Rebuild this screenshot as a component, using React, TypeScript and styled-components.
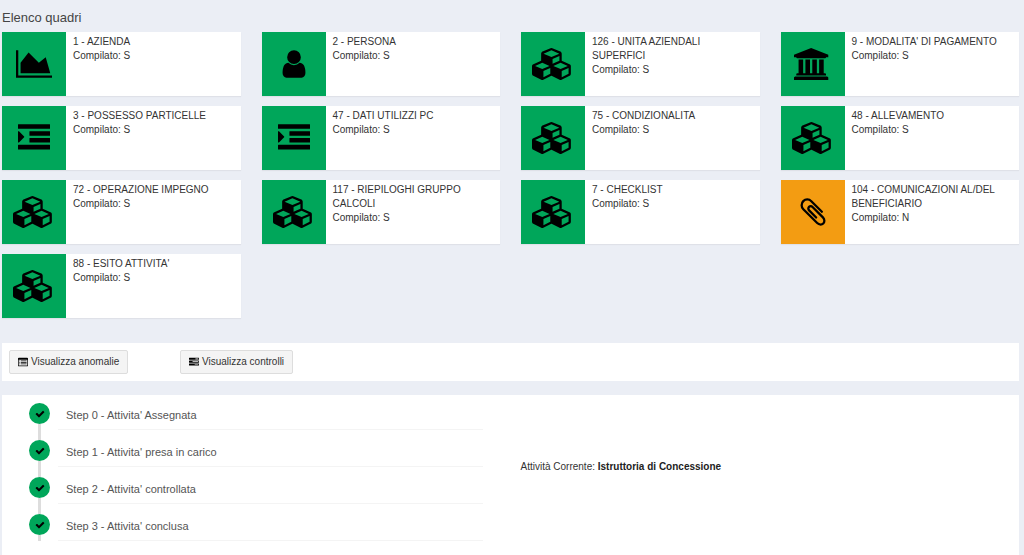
import React from "react";
import styled, { createGlobalStyle } from "styled-components";

const GlobalStyle = createGlobalStyle`
  *, *::before, *::after { box-sizing: border-box; }
  body {
    margin: 0;
    background: #ebeef5;
    color: #333;
    font-family: "Liberation Sans", Arial, sans-serif;
    font-size: 10px;
    line-height: 14px;
  }
`;

const Page = styled.main`
  display: flex;
  flex-direction: column;
  min-height: 100vh;
  padding: 11px 5px 0 2px;
`;

const Title = styled.h1`
  margin: 0 0 7px;
  font-size: 13px;
  line-height: 14px;
  font-weight: 400;
  color: #444;
`;

const Grid = styled.section`
  display: grid;
  grid-template-columns: repeat(4, minmax(0, 1fr));
  gap: 10px 21px;
`;

const Card = styled.article`
  display: flex;
  min-height: 64px;
  background: #fff;
  box-shadow: 0 1px 1px rgba(0, 0, 0, 0.05);
`;

const CardIcon = styled.div<{ $tone: Tone }>`
  display: flex;
  flex: none;
  align-items: center;
  justify-content: center;
  width: 64px;
  background: ${(p) => (p.$tone === "green" ? "#00a65a" : "#f39c12")};
`;

const CardBody = styled.div`
  flex: 1;
  min-width: 0;
  padding: 3px 7px;
`;

const CardLine = styled.p`
  margin: 0;
  line-height: 14px;
`;

const Glyph = styled.svg<{ $size: number }>`
  display: block;
  flex: none;
  height: ${(p) => p.$size}px;
  width: auto;
  fill: #000;
`;

const Toolbar = styled.section`
  display: grid;
  grid-template-columns: repeat(6, minmax(0, 1fr));
  column-gap: 23px;
  margin-top: 25px;
  padding: 7px;
  background: #fff;
`;

const Button = styled.button`
  display: inline-flex;
  align-items: center;
  justify-self: start;
  gap: 3px;
  height: 24px;
  padding: 0 8px;
  border: 1px solid #ddd;
  border-radius: 2px;
  background: #f4f4f4;
  color: #333;
  font: inherit;
  white-space: nowrap;
  cursor: pointer;
`;

const Activity = styled.section`
  display: grid;
  flex: 1;
  grid-template-columns: minmax(0, 1fr) minmax(0, 1fr);
  align-items: start;
  margin-top: 14px;
  padding: 8px 0 14px;
  background: #fff;
`;

const Steps = styled.ol`
  margin: 0;
  padding: 0 28px 0 27px;
  list-style: none;
`;

const Step = styled.li`
  display: flex;
  gap: 8px;
`;

const Marker = styled.div`
  display: flex;
  flex-direction: column;
  align-items: center;
  width: 21px;

  &::after {
    content: "";
    flex: 1;
    width: 3px;
    background: #ddd;
  }
`;

const Dot = styled.span`
  display: flex;
  align-items: center;
  justify-content: center;
  width: 21px;
  height: 21px;
  border-radius: 50%;
  background: #00a65a;
`;

const StepText = styled.div`
  flex: 1;
  height: 27px;
  margin-bottom: 10px;
  padding: 5px 8px;
  border-bottom: 1px solid #f4f4f4;
  color: #555;
  font-size: 11px;

  ${Step}:last-child & {
    margin-bottom: 0;
  }
`;

const Current = styled.p`
  margin: 0;
  padding: 57px 10px 0;
`;

const Strong = styled.strong`
  color: #222;
`;

type Tone = "green" | "orange";

const icons = {
  chart: {
    width: 2048,
    d: "M2048 1536v128h-2048v-1536h128v1408h1920zm-384-1024l256 896h-1664v-576l448-576 576 576z",
  },
  user: {
    width: 1792,
    d: "M1536 1399q0 109-62.500 187t-150.500 78h-854q-88 0-150.500-78t-62.500-187q0-85 8.500-160.500t31.500-152 58.500-131 94-89 134.500-34.500q131 128 313 128t313-128q76 0 134.500 34.500t94 89 58.500 131 31.500 152 8.500 160.500zm-256-887q0 159-112.500 271.500t-271.500 112.500-271.500-112.500-112.500-271.500 112.500-271.500 271.500-112.500 271.500 112.500 112.500 271.500z",
  },
  cubes: {
    width: 2304,
    d: "M640 1632l384-192v-314l-384 164v342zm-64-454l404-173-404-173-404 173zm1088 454l384-192v-314l-384 164v342zm-64-454l404-173-404-173-404 173zm-448-293l384-165v-266l-384 164v267zm-64-379l441-189-441-189-441 189zm1088 518v416q0 36-19 67t-52 47l-448 224q-25 14-57 14t-57-14l-448-224q-5-2-7-4-2 2-7 4l-448 224q-25 14-57 14t-57-14l-448-224q-33-16-52-47t-19-67v-416q0-38 21.500-70t56.500-48l434-186v-400q0-38 21.500-70t56.500-48l448-192q23-10 50-10t50 10l448 192q35 16 56.500 48t21.500 70v400l434 186q36 16 57 48t21 70z",
  },
  bank: {
    width: 2048,
    d: "M960 0l960 384v128h-128q0 26-20.500 45t-48.500 19h-1526q-28 0-48.500-19t-20.500-45h-128v-128zm-704 640h256v768h128v-768h256v768h128v-768h256v768h128v-768h256v768h59q28 0 48.500 19t20.500 45v64h-1664v-64q0-26 20.500-45t48.500-19h59v-768zm1595 960q28 0 48.500 19t20.500 45v128h-1920v-128q0-26 20.500-45t48.500-19h1782z",
  },
  indent: {
    width: 1792,
    d: "M352 832q0 14-9 23l-288 288q-9 9-23 9-13 0-22.500-9.500t-9.500-22.500v-576q0-13 9.500-22.500t22.500-9.500q14 0 23 9l288 288q9 9 9 23zM16 128h1760q16 0 16 16v224q0 16-16 16h-1760q-16 0-16-16v-224q0-16 16-16zM656 512h1120q16 0 16 16v224q0 16-16 16h-1120q-16 0-16-16v-224q0-16 16-16zM656 896h1120q16 0 16 16v224q0 16-16 16h-1120q-16 0-16-16v-224q0-16 16-16zM16 1280h1760q16 0 16 16v224q0 16-16 16h-1760q-16 0-16-16v-224q0-16 16-16z",
  },
  clip: {
    width: 1792,
    d: "M1596 1385q0 117-79 196t-196 79q-135 0-235-100l-777-776q-113-115-113-271 0-159 110-270t269-111q158 0 273 113l605 606q10 10 10 22 0 16-30.500 46.500t-46.500 30.500q-13 0-23-10l-606-607q-79-77-181-77-106 0-179 75t-73 181q0 105 76 181l776 777q63 63 145 63 64 0 106-42t42-106q0-82-63-145l-581-581q-26-24-60-24-29 0-48 19t-19 48q0 32 25 59l410 410q10 10 10 22 0 16-31 47t-47 31q-12 0-22-10l-410-410q-63-61-63-149 0-82 57-139t139-57q88 0 149 63l581 581q100 98 100 235z",
  },
  check: {
    width: 1792,
    d: "M1671 566q0 40-28 68l-724 724-136 136q-28 28-68 28t-68-28l-136-136-362-362q-28-28-28-68t28-68l136-136q28-28 68-28t68 28l294 295 656-657q28-28 68-28t68 28l136 136q28 28 28 68z",
  },
  list: {
    width: 1792,
    d: "M160 128h1472q160 0 160 160v1216q0 160-160 160h-1472q-160 0-160-160v-1216q0-160 160-160zM128 512v960q0 64 64 64h1408q64 0 64-64v-960zM256 640h128v128h-128zM512 640h1024v128h-1024zM256 896h128v128h-128zM512 896h1024v128h-1024zM256 1152h128v128h-128zM512 1152h1024v128h-1024z",
  },
  tasks: {
    width: 1792,
    d: "M64 128h1664q64 0 64 64v256q0 64-64 64h-1664q-64 0-64-64v-256q0-64 64-64zM1152 256v128h512v-128zM64 640h1664q64 0 64 64v256q0 64-64 64h-1664q-64 0-64-64v-256q0-64 64-64zM640 768v128h1024v-128zM64 1152h1664q64 0 64 64v256q0 64-64 64h-1664q-64 0-64-64v-256q0-64 64-64zM1024 1280v128h640v-128z",
  },
};

type IconName = keyof typeof icons;

function Icon({ name, size }: { name: IconName; size: number }) {
  const { width, d } = icons[name];
  return (
    <Glyph $size={size} viewBox={`0 0 ${width} 1792`} aria-hidden="true">
      <path d={d} fillRule={name === "list" || name === "tasks" ? "evenodd" : "nonzero"} />
    </Glyph>
  );
}

const panels: { title: string; icon: IconName; done: boolean }[] = [
  { title: "1 - AZIENDA", icon: "chart", done: true },
  { title: "2 - PERSONA", icon: "user", done: true },
  { title: "126 - UNITA AZIENDALI SUPERFICI", icon: "cubes", done: true },
  { title: "9 - MODALITA' DI PAGAMENTO", icon: "bank", done: true },
  { title: "3 - POSSESSO PARTICELLE", icon: "indent", done: true },
  { title: "47 - DATI UTILIZZI PC", icon: "indent", done: true },
  { title: "75 - CONDIZIONALITA", icon: "cubes", done: true },
  { title: "48 - ALLEVAMENTO", icon: "cubes", done: true },
  { title: "72 - OPERAZIONE IMPEGNO", icon: "cubes", done: true },
  { title: "117 - RIEPILOGHI GRUPPO CALCOLI", icon: "cubes", done: true },
  { title: "7 - CHECKLIST", icon: "cubes", done: true },
  { title: "104 - COMUNICAZIONI AL/DEL BENEFICIARIO", icon: "clip", done: false },
  { title: "88 - ESITO ATTIVITA'", icon: "cubes", done: true },
];

const steps = [
  "Step 0 - Attivita' Assegnata",
  "Step 1 - Attivita' presa in carico",
  "Step 2 - Attivita' controllata",
  "Step 3 - Attivita' conclusa",
];

export default function App() {
  return (
    <>
      <GlobalStyle />
      <Page>
        <Title>Elenco quadri</Title>
        <Grid>
          {panels.map((panel) => (
            <Card key={panel.title}>
              <CardIcon $tone={panel.done ? "green" : "orange"}>
                <Icon name={panel.icon} size={32} />
              </CardIcon>
              <CardBody>
                <CardLine>{panel.title}</CardLine>
                <CardLine>Compilato: {panel.done ? "S" : "N"}</CardLine>
              </CardBody>
            </Card>
          ))}
        </Grid>
        <Toolbar>
          <Button type="button">
            <Icon name="list" size={10} />
            Visualizza anomalie
          </Button>
          <Button type="button">
            <Icon name="tasks" size={10} />
            Visualizza controlli
          </Button>
        </Toolbar>
        <Activity>
          <Steps>
            {steps.map((step) => (
              <Step key={step}>
                <Marker>
                  <Dot>
                    <Icon name="check" size={10} />
                  </Dot>
                </Marker>
                <StepText>{step}</StepText>
              </Step>
            ))}
          </Steps>
          <Current>
            Attività Corrente: <Strong>Istruttoria di Concessione</Strong>
          </Current>
        </Activity>
      </Page>
    </>
  );
}
